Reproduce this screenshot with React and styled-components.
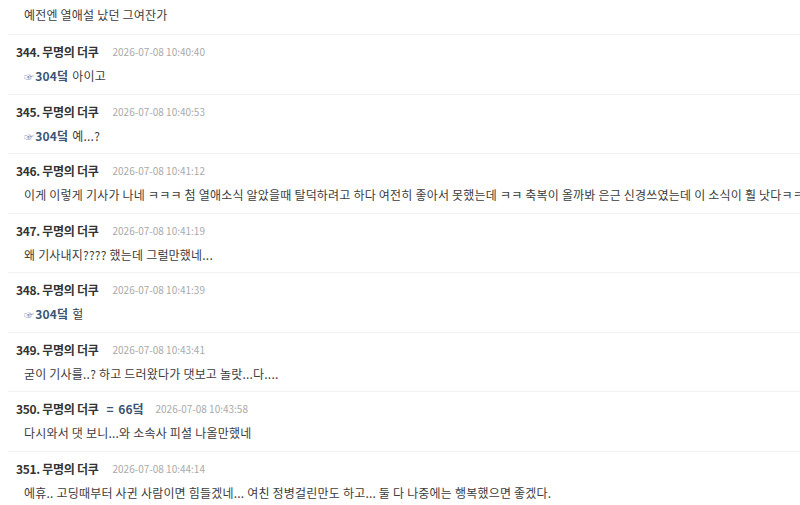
import React from 'react';
import styled, { createGlobalStyle } from 'styled-components';

const GlobalStyle = createGlobalStyle`
    html, body {
        margin: 0;
        padding: 0;
        background: #fff;
    }
    body {
        font-family: "Noto Sans CJK KR", "Noto Sans", sans-serif;
        overflow: hidden;
    }
`;

const List = styled.div`
    padding-left: 8px;
    width: 792px;
    overflow: hidden;
`;

const Item = styled.div`
    border-top: ${p => (p.$first ? 'none' : '1px solid #f1f1f1')};
    padding: ${p => (p.$first ? '6px 8px 10px' : '7px 8px 9px')};
    &:nth-child(odd) {
        padding-bottom: ${p => (p.$first ? '10px' : '8px')};
    }
`;

const Header = styled.div`
    display: flex;
    align-items: center;
    height: 18px;
`;

const Name = styled.span`
    font-size: 12px;
    font-weight: 700;
    color: #333;
    letter-spacing: -0.3px;
`;

const Tag = styled.span`
    font-size: 12px;
    font-weight: 700;
    color: #3b5574;
    margin-left: 8px;
    word-spacing: 2px;
`;

const Date = styled.span`
    font-size: 10px;
    color: #aaa;
    margin-left: ${p => (p.$afterTag ? '12px' : '14px')};
`;

const Body = styled.div`
    margin-top: 7px;
    padding-left: 8px;
    height: 18px;
    line-height: 18px;
    font-size: 12px;
    color: #3c3c3c;
    white-space: nowrap;
    letter-spacing: 0.2px;
    ${p => p.$first && 'margin-top: 0;'}
`;

const Reply = styled.span`
    font-weight: 700;
    color: #3b5574;
    margin-right: 4px;
`;

const Hand = styled.span`
    font-size: 10px;
    font-weight: 400;
    color: #6f87a3;
    margin-right: 1px;
`;

const comments = [
    { no: 344, date: '2026-07-08 10:40:40', reply: '304덬', text: '아이고' },
    { no: 345, date: '2026-07-08 10:40:53', reply: '304덬', text: '예...?' },
    { no: 346, date: '2026-07-08 10:41:12', text: '이게 이렇게 기사가 나네 ㅋㅋㅋ 첨 열애소식 알았을때 탈덕하려고 하다 여전히 좋아서 못했는데 ㅋㅋ 축복이 올까봐 은근 신경쓰였는데 이 소식이 훨 낫다ㅋㅋㅋ' },
    { no: 347, date: '2026-07-08 10:41:19', text: '왜 기사내지???? 했는데 그럴만했네...' },
    { no: 348, date: '2026-07-08 10:41:39', reply: '304덬', text: '헐' },
    { no: 349, date: '2026-07-08 10:43:41', text: '굳이 기사를..? 하고 드러왔다가 댓보고 놀랏...다....' },
    { no: 350, date: '2026-07-08 10:43:58', tag: '= 66덬', text: '다시와서 댓 보니...와 소속사 피셜 나올만했네' },
    { no: 351, date: '2026-07-08 10:44:14', text: '에휴.. 고딩때부터 사귄 사람이면 힘들겠네... 여친 정병걸린만도 하고... 둘 다 나중에는 행복했으면 좋겠다.' },
];

export default function App() {
    return (
        <>
            <GlobalStyle />
            <List>
                <Item $first>
                    <Body $first>예전엔 열애설 났던 그여잔가</Body>
                </Item>
                {comments.map(c => (
                    <Item key={c.no}>
                        <Header>
                            <Name>{c.no}. 무명의 더쿠</Name>
                            {c.tag && <Tag>{c.tag}</Tag>}
                            <Date $afterTag={!!c.tag}>{c.date}</Date>
                        </Header>
                        <Body>
                            {c.reply && (
                                <Reply>
                                    <Hand>☞</Hand>
                                    {c.reply}
                                </Reply>
                            )}
                            {c.text}
                        </Body>
                    </Item>
                ))}
            </List>
        </>
    );
}
